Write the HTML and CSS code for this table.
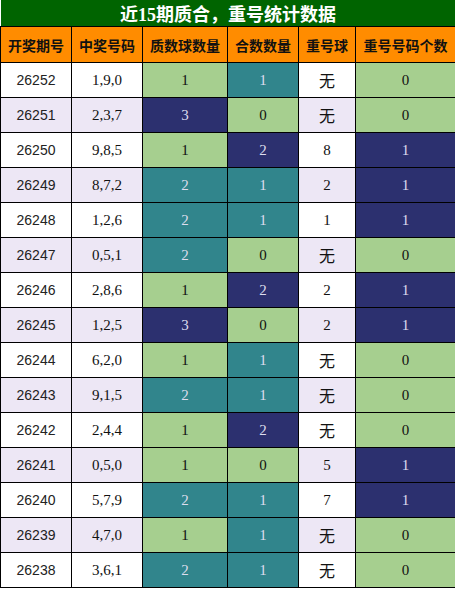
FILE: index.html
```html
<!DOCTYPE html>
<html lang="zh-CN">

<head>
    <meta charset="UTF-8">
    <meta name="viewport" content="width=device-width, initial-scale=1.0">
    <title>近15期质合，重号统计数据</title>
    <link rel="stylesheet" href="styles.css">
</head>

<body>
    <table class="stats">
        <colgroup>
            <col class="c1">
            <col class="c2">
            <col class="c3">
            <col class="c4">
            <col class="c5">
            <col class="c6">
        </colgroup>
        <tr class="title-row">
            <th colspan="6">近15期质合，重号统计数据</th>
        </tr>
        <tr class="head-row">
            <th>开奖期号</th>
            <th>中奖号码</th>
            <th>质数球数量</th>
            <th>合数数量</th>
            <th>重号球</th>
            <th>重号号码个数</th>
        </tr>
        <tr>
            <td class="issue">26252</td><td class="num">1,9,0</td>
            <td class="lg">1</td><td class="tl">1</td>
            <td class="none">无</td><td class="lg">0</td>
        </tr>
        <tr class="alt">
            <td class="issue">26251</td><td class="num">2,3,7</td>
            <td class="nv">3</td><td class="lg">0</td>
            <td class="none">无</td><td class="lg">0</td>
        </tr>
        <tr>
            <td class="issue">26250</td><td class="num">9,8,5</td>
            <td class="lg">1</td><td class="nv">2</td>
            <td class="num">8</td><td class="nv">1</td>
        </tr>
        <tr class="alt">
            <td class="issue">26249</td><td class="num">8,7,2</td>
            <td class="tl">2</td><td class="tl">1</td>
            <td class="num">2</td><td class="nv">1</td>
        </tr>
        <tr>
            <td class="issue">26248</td><td class="num">1,2,6</td>
            <td class="tl">2</td><td class="tl">1</td>
            <td class="num">1</td><td class="nv">1</td>
        </tr>
        <tr class="alt">
            <td class="issue">26247</td><td class="num">0,5,1</td>
            <td class="tl">2</td><td class="lg">0</td>
            <td class="none">无</td><td class="lg">0</td>
        </tr>
        <tr>
            <td class="issue">26246</td><td class="num">2,8,6</td>
            <td class="lg">1</td><td class="nv">2</td>
            <td class="num">2</td><td class="nv">1</td>
        </tr>
        <tr class="alt">
            <td class="issue">26245</td><td class="num">1,2,5</td>
            <td class="nv">3</td><td class="lg">0</td>
            <td class="num">2</td><td class="nv">1</td>
        </tr>
        <tr>
            <td class="issue">26244</td><td class="num">6,2,0</td>
            <td class="lg">1</td><td class="tl">1</td>
            <td class="none">无</td><td class="lg">0</td>
        </tr>
        <tr class="alt">
            <td class="issue">26243</td><td class="num">9,1,5</td>
            <td class="tl">2</td><td class="tl">1</td>
            <td class="none">无</td><td class="lg">0</td>
        </tr>
        <tr>
            <td class="issue">26242</td><td class="num">2,4,4</td>
            <td class="lg">1</td><td class="nv">2</td>
            <td class="none">无</td><td class="lg">0</td>
        </tr>
        <tr class="alt">
            <td class="issue">26241</td><td class="num">0,5,0</td>
            <td class="lg">1</td><td class="lg">0</td>
            <td class="num">5</td><td class="nv">1</td>
        </tr>
        <tr>
            <td class="issue">26240</td><td class="num">5,7,9</td>
            <td class="tl">2</td><td class="tl">1</td>
            <td class="num">7</td><td class="nv">1</td>
        </tr>
        <tr class="alt">
            <td class="issue">26239</td><td class="num">4,7,0</td>
            <td class="lg">1</td><td class="tl">1</td>
            <td class="none">无</td><td class="lg">0</td>
        </tr>
        <tr>
            <td class="issue">26238</td><td class="num">3,6,1</td>
            <td class="tl">2</td><td class="tl">1</td>
            <td class="none">无</td><td class="lg">0</td>
        </tr>
    </table>
</body>

</html>
```

FILE: styles.css
```css
body {
    margin: 0;
    padding: 0;
    background-color: #fff;
}

.stats {
    width: 455px;
    border-collapse: collapse;
    table-layout: fixed;
    font-family: "Liberation Serif", "Noto Sans CJK SC", serif;
    font-size: 15px;
    color: #111;
}

.c1 { width: 71px; }
.c2 { width: 71px; }
.c3 { width: 85px; }
.c4 { width: 71px; }
.c5 { width: 57px; }
.c6 { width: 100px; }

.stats th,
.stats td {
    border: 1px solid #000;
    padding: 0;
    text-align: center;
    white-space: nowrap;
}

.title-row th {
    height: 26px;
    background-color: #006400;
    color: #fff;
    font-family: "Liberation Serif", "Noto Sans CJK SC", serif;
    font-size: 18px;
    font-weight: bold;
    border-top: none;
    border-left: none;
    border-right: none;
}

.head-row th {
    height: 35px;
    background-color: #ff8c00;
    color: #111;
    font-family: "Noto Sans CJK SC", sans-serif;
    font-size: 14px;
    font-weight: bold;
}

.stats tr td {
    height: 34px;
    background-color: #fff;
}

.stats tr.alt td {
    background-color: #ede7f5;
}

.stats tr td.issue {
    font-family: "Liberation Sans", "DejaVu Sans", sans-serif;
    font-size: 14px;
    color: #222;
}

.stats tr td.lg {
    background-color: #a6cf8f;
    color: #111;
}

.stats tr td.tl {
    background-color: #31858c;
    color: #dde;
}

.stats tr td.nv {
    background-color: #2c306f;
    color: #dde;
}

.stats tr td.none {
    font-family: "Noto Sans CJK SC", sans-serif;
    font-size: 16px;
}
```
